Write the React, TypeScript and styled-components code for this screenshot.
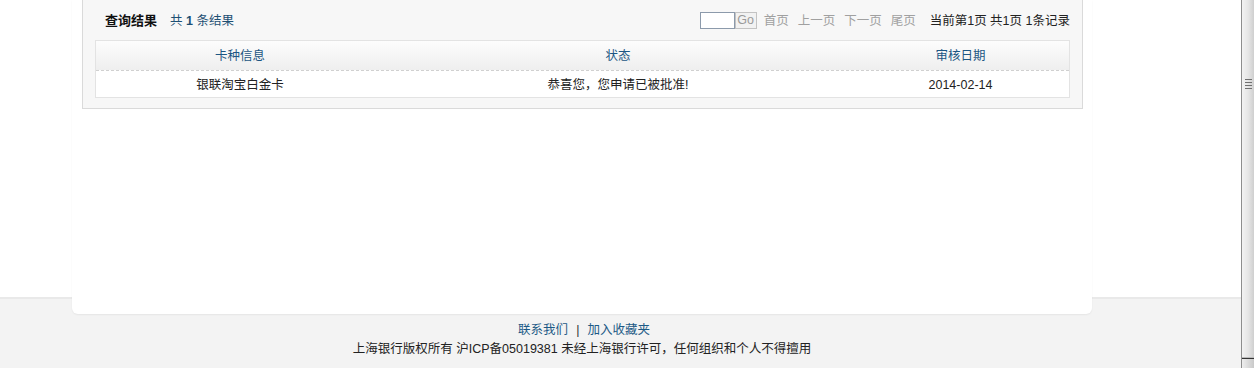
import React from "react";
import styled, { createGlobalStyle } from "styled-components";

const GlobalStyle = createGlobalStyle`
  html, body { margin: 0; padding: 0; }
  body {
    font-family: "Liberation Sans", Arial, "Noto Sans CJK SC", sans-serif;
    font-size: 12px;
    color: #333;
    overflow: hidden;
  }
`;

const Page = styled.div`
  width: 1254px;
  height: 368px;
  display: flex;
  background: linear-gradient(#fff 0 297px, #e9e9e9 297px 299px, #f3f3f3 299px);
`;

const Viewport = styled.div`
  width: 1241px;
  display: flex;
  flex-direction: column;
`;

const Container = styled.div`
  width: 1020px;
  height: 314px;
  margin-left: 72px;
  background: #fff;
  border-radius: 0 0 6px 6px;
  box-shadow: 0 1px 2px rgba(0, 0, 0, 0.06);
  padding: 0 9px 0 10px;
  box-sizing: border-box;
`;

const Panel = styled.div`
  background: #f7f7f7;
  border: 1px solid #dadada;
  border-top: none;
  padding: 0 12px 10px 12px;
  height: 109px;
  box-sizing: border-box;
`;

const TitleBar = styled.div`
  height: 40px;
  box-sizing: border-box;
  padding: 1px 0 0 10px;
  display: flex;
  align-items: center;
  justify-content: space-between;
  line-height: 16px;
`;

const Title = styled.div`
  display: flex;
  align-items: center;
  gap: 13px;
`;

const TitleText = styled.span`
  font-weight: bold;
  font-size: 13px;
  color: #111;
`;

const Count = styled.span`
  color: #1d4f73;
  font-size: 12.5px;
  b { font-weight: bold; }
`;

const Pager = styled.div`
  display: flex;
  align-items: center;
  color: #a0a0a0;
  font-size: 12.5px;
`;

const PageInput = styled.div`
  width: 33px;
  height: 15px;
  border: 1px solid #8c9aab;
  background: #fff;
`;

const GoButton = styled.div`
  width: 20px;
  height: 15px;
  border: 1px solid #c3c3c3;
  background: #f2f2f2;
  color: #9a9a9a;
  font-size: 12.5px;
  line-height: 15px;
  text-align: center;
  margin-right: 6px;
`;

const PageLink = styled.span`
  margin: 0 8px 0 0;
  padding-left: 1px;
`;

const PageInfo = styled.span`
  color: #222;
  margin-left: 6px;
`;

const Table = styled.div`
  border: 1px solid #e3e3e3;
  background: #fff;
`;

const Row = styled.div<{ $head?: boolean }>`
  display: grid;
  grid-template-columns: 288px 468px 1fr;
  height: ${(p) => (p.$head ? "30px" : "26px")};
  box-sizing: border-box;
  padding-top: ${(p) => (p.$head ? "0px" : "2px")};
  line-height: 16px;
  align-items: center;
  background: ${(p) => (p.$head ? "linear-gradient(#fdfdfd, #eeeeee)" : "#fff")};
  border-bottom: ${(p) => (p.$head ? "1px dashed #d0d0d0" : "none")};
  color: ${(p) => (p.$head ? "#1c5683" : "#222")};
  font-size: 12.5px;
`;

const Cell = styled.div`
  text-align: center;
`;

const Footer = styled.div`
  display: flex;
  flex-direction: column;
  align-items: center;
  width: 1020px;
  margin-left: 72px;
  padding-top: 8px;
  gap: 3px;
  font-size: 12.5px;
  line-height: 16px;
`;

const FooterLinks = styled.div`
  color: #1d5a86;
  display: flex;
  gap: 8px;
  margin-left: 4px;
`;

const Sep = styled.span`
  color: #333;
`;

const Copy = styled.div`
  color: #222;
`;

const Scrollbar = styled.div`
  width: 13px;
  height: 368px;
  display: flex;
  flex-direction: column;
  border-left: 1px solid #8d8d8d;
  box-sizing: border-box;
  background: linear-gradient(90deg, #f2f2f2, #e6e6e6 50%, #cfcfcf);
`;

const Thumb = styled.div`
  flex: 1;
  display: flex;
  flex-direction: column;
  align-items: center;
  padding-top: 79px;
  gap: 2px;
  border-bottom: 1px solid #bbb;
`;

const Grip = styled.div`
  width: 7px;
  height: 1px;
  background: #6f6f6f;
`;

const ArrowBtn = styled.div`
  height: 9px;
  background: linear-gradient(90deg, #eee, #c9c9c9);
  border-top: 1px solid #333;
`;

export default function App() {
  return (
    <>
      <GlobalStyle />
      <Page>
        <Viewport>
          <Container>
            <Panel>
              <TitleBar>
                <Title>
                  <TitleText>查询结果</TitleText>
                  <Count>
                    共 <b>1</b> 条结果
                  </Count>
                </Title>
                <Pager>
                  <PageInput />
                  <GoButton>Go</GoButton>
                  <PageLink>首页</PageLink>
                  <PageLink>上一页</PageLink>
                  <PageLink>下一页</PageLink>
                  <PageLink>尾页</PageLink>
                  <PageInfo>当前第1页 共1页 1条记录</PageInfo>
                </Pager>
              </TitleBar>
              <Table>
                <Row $head>
                  <Cell>卡种信息</Cell>
                  <Cell>状态</Cell>
                  <Cell>审核日期</Cell>
                </Row>
                <Row>
                  <Cell>银联淘宝白金卡</Cell>
                  <Cell>恭喜您，您申请已被批准!</Cell>
                  <Cell>2014-02-14</Cell>
                </Row>
              </Table>
            </Panel>
          </Container>
          <Footer>
            <FooterLinks>
              <span>联系我们</span>
              <Sep>|</Sep>
              <span>加入收藏夹</span>
            </FooterLinks>
            <Copy>上海银行版权所有 沪ICP备05019381 未经上海银行许可，任何组织和个人不得擅用</Copy>
          </Footer>
        </Viewport>
        <Scrollbar>
          <Thumb>
            <Grip />
            <Grip />
            <Grip />
            <Grip />
          </Thumb>
          <ArrowBtn />
        </Scrollbar>
      </Page>
    </>
  );
}
